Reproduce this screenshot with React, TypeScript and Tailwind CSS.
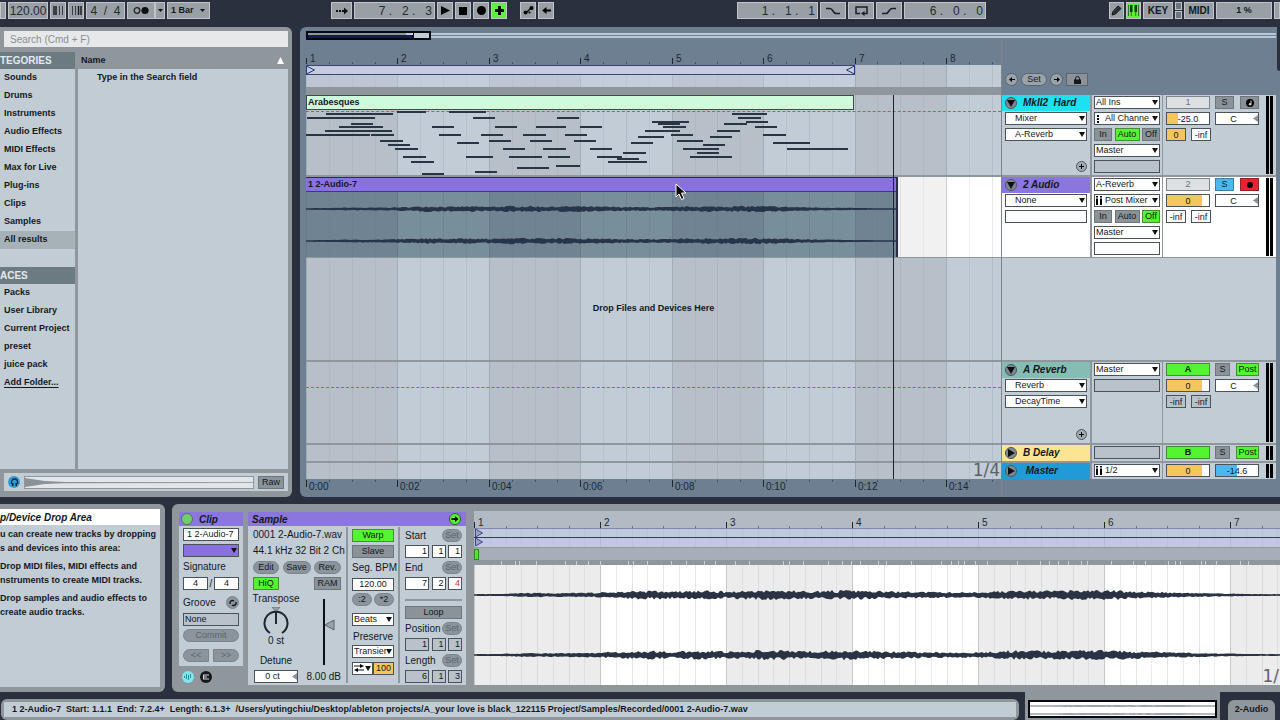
import { clsx } from "clsx";
import type { ComponentProps, ReactNode } from "react";

const ARRANGE_BAR = 640 / 7;
const CLIP_BAR = 126;

type Note = [x: number, y: number, width: number];

const NOTES: Note[] = [
	[20, 19, 67], [1, 23, 68], [45, 29, 22], [33, 32, 44], [19, 36, 67],
	[0, 40, 64], [65, 40, 23], [74, 46, 23], [82, 50, 22], [89, 54, 23],
	[97, 62, 23], [105, 67, 23], [116, 79, 22], [91, 17, 29], [143, 17, 37],
	[167, 23, 22], [126, 32, 22], [133, 40, 22], [151, 48, 22], [160, 62, 27],
	[169, 77, 22], [175, 40, 22], [183, 46, 22], [189, 32, 22], [197, 54, 22],
	[203, 62, 33], [211, 73, 32], [217, 40, 23], [224, 46, 22], [230, 32, 30],
	[237, 54, 23], [242, 62, 22], [250, 71, 24], [251, 23, 22], [259, 40, 22],
	[268, 46, 22], [274, 32, 22], [284, 54, 22], [291, 62, 25], [302, 67, 39],
	[311, 64, 22], [317, 58, 23], [325, 48, 22], [332, 42, 26], [339, 36, 35],
	[346, 27, 37], [352, 29, 22], [357, 32, 23], [365, 40, 22], [371, 46, 26],
	[377, 54, 36], [391, 58, 22], [384, 62, 42], [397, 50, 22], [404, 42, 22],
	[411, 36, 23], [418, 29, 23], [426, 19, 35], [432, 23, 23], [440, 27, 22],
	[449, 32, 22], [457, 40, 23], [467, 48, 37], [481, 54, 61],
];

const CATEGORIES = [
	"Sounds",
	"Drums",
	"Instruments",
	"Audio Effects",
	"MIDI Effects",
	"Max for Live",
	"Plug-ins",
	"Clips",
	"Samples",
	"All results",
];

const PLACES = [
	"Packs",
	"User Library",
	"Current Project",
	"preset",
	"juice pack",
];

// Loudness of the recording over its length, 0..1
const ENVELOPE = [
	0.05, 0.12, 0.35, 0.3, 0.4, 0.6, 0.95, 0.7, 0.9, 0.7, 1, 0.95, 0.8, 1,
	0.8, 0.7, 0.6, 0.5, 0.6, 0.9, 0.85, 0.95, 1, 0.9, 0.6, 0.45, 0.3, 0.15,
	0.05, 0.05,
];

function wavePath(width: number, mid: number, peak: number, seed: number) {
	let s = seed;
	const random = () => {
		s = (s * 16807) % 2147483647;
		return s / 2147483647;
	};
	const top: string[] = [];
	const bottom: string[] = [];
	for (let x = 0; x <= width; x += 2) {
		const p = (x / width) * (ENVELOPE.length - 1);
		const i = Math.min(Math.floor(p), ENVELOPE.length - 2);
		const level = ENVELOPE[i] + (ENVELOPE[i + 1] - ENVELOPE[i]) * (p - i);
		const up = 0.7 + peak * level * (0.3 + 0.7 * random());
		const down = 0.7 + peak * level * (0.3 + 0.7 * random());
		top.push(`${x},${(mid - up).toFixed(1)}`);
		bottom.unshift(`${x},${(mid + down).toFixed(1)}`);
	}
	return `M${top.join("L")}L${bottom.join("L")}Z`;
}

interface GridProps {
	bar: number;
	steps: number;
	odd: string;
	even: string;
	line: string;
}

/**
 * Alternating bar shading with beat lines, fills its positioned parent.
 */
function Grid({ bar, steps, odd, even, line }: GridProps) {
	return (
		<svg className="absolute inset-0 size-full" shapeRendering="crispEdges">
			{Array.from({ length: 24 }, (_, i) => (
				<g key={i}>
					<rect
						x={i * bar}
						width={bar}
						height="100%"
						fill={i % 2 ? even : odd}
					/>
					{Array.from({ length: steps }, (_, j) => (
						<rect
							key={j}
							x={Math.round(i * bar + (j * bar) / steps)}
							width="1"
							height="100%"
							fill={line}
							opacity={j === 0 ? 1 : j % 2 ? 0.35 : 0.5}
						/>
					))}
				</g>
			))}
		</svg>
	);
}

function LaneGrid() {
	return (
		<Grid
			bar={ARRANGE_BAR}
			steps={4}
			odd="#b7bfc9"
			even="#c1ccd6"
			line="#a3adb7"
		/>
	);
}

interface RulerProps {
	bar: number;
	bars: number;
	steps: number;
	label: (index: number) => string;
	labelOffset?: number;
	baseline: number;
	tickTop: number;
	tickBottom: number;
	fromBottom?: boolean;
}

function Ruler({
	bar,
	bars,
	steps,
	label,
	labelOffset = 4,
	baseline,
	tickTop,
	tickBottom,
	fromBottom = true,
}: RulerProps) {
	return (
		<svg className="absolute inset-0 size-full" shapeRendering="crispEdges">
			{Array.from({ length: bars }, (_, i) => (
				<g key={i} fill="#1f2733">
					<rect
						x={Math.round(i * bar)}
						y={tickTop}
						width="1"
						height={tickBottom - tickTop}
					/>
					{Array.from({ length: steps - 1 }, (_, j) => (
						<rect
							key={j}
							x={Math.round(i * bar + ((j + 1) * bar) / steps)}
							y={fromBottom ? tickBottom - 2 : tickTop}
							width="1"
							height="2"
							opacity="0.5"
						/>
					))}
					<text
						x={Math.round(i * bar) + labelOffset}
						y={baseline}
						fontSize="10"
					>
						{label(i)}
					</text>
				</g>
			))}
		</svg>
	);
}

function Caret({ className }: { className?: string }) {
	return (
		<svg className={clsx("h-[5px] w-[6px]", className)} viewBox="0 0 6 5">
			<path d="M0 0h6L3 5z" fill="#111" />
		</svg>
	);
}

interface PickerProps {
	label: string;
	value: string;
	className?: string;
	fill?: string;
	icon?: ReactNode;
	inset?: string;
}

function Picker({
	label,
	value,
	className,
	fill = "bg-white",
	icon,
	inset = "pl-px",
}: PickerProps) {
	return (
		<span
			className={clsx(
				"relative flex h-[13px] min-w-0 items-center border border-[#4a525b]",
				fill,
				className,
			)}
		>
			{icon}
			<select
				aria-label={label}
				className={clsx(
					"h-full w-full min-w-0 appearance-none bg-transparent pr-[7px] text-[9px] leading-[11px] outline-none",
					inset,
				)}
			>
				<option>{value}</option>
			</select>
			<Caret className="pointer-events-none absolute right-px" />
		</span>
	);
}

function Field({ className, ...props }: ComponentProps<"input">) {
	return (
		<input
			className={clsx(
				"h-[13px] min-w-0 border border-[#4a525b] px-px text-[9px] leading-[11px] outline-none",
				className,
			)}
			{...props}
		/>
	);
}

function Toggle({ className, children, ...props }: ComponentProps<"button">) {
	return (
		<button
			type="button"
			className={clsx(
				"flex h-[13px] items-center justify-center border text-[9px] leading-[11px]",
				className,
			)}
			{...props}
		>
			{children}
		</button>
	);
}

const OFF = "border-[#6e767d] bg-[#8b9298]";
const ON = "border-[#4b8a3b] bg-[#52f52f]";
const PILL = "rounded-full border-[#7b848c] bg-[#8b949b]";

/* Transport */

function BarButton({ className, children, ...props }: ComponentProps<"button">) {
	return (
		<button
			type="button"
			className={clsx(
				"flex h-[17px] shrink-0 items-center justify-center border border-[#bfc5ca]",
				className,
			)}
			{...props}
		>
			{children}
		</button>
	);
}

function BarField({ className, ...props }: ComponentProps<"input">) {
	return (
		<input
			className={clsx(
				"h-[17px] border border-[#bfc5ca] bg-[#989fa5] text-[#242b33] text-[12px] outline-none",
				className,
			)}
			{...props}
		/>
	);
}

function Transport() {
	return (
		<header className="flex h-[27px] items-start pt-[2px] text-[#14181d]">
			<div className="flex gap-[2px]">
				<BarButton aria-label="Tap options" className="w-[6px] bg-[#989fa5]" />
				<BarField
					aria-label="Tempo"
					defaultValue="120.00"
					className="w-10 text-center"
				/>
				<BarButton aria-label="Nudge down" className="w-4 bg-[#989fa5]">
					<svg className="size-[11px]" viewBox="0 0 11 11">
						<path d="M1 1v9M3 1v9" stroke="#1a1f26" strokeWidth="1.500" />
						<path d="M6.500 1v9M9.500 1v9" stroke="#3a4048" />
					</svg>
				</BarButton>
				<BarButton aria-label="Nudge up" className="w-4 bg-[#989fa5]">
					<svg className="size-[11px]" viewBox="0 0 11 11">
						<path d="M1.500 1v9M4.500 1v9" stroke="#3a4048" />
						<path d="M7.500 1v9M10 1v9" stroke="#1a1f26" strokeWidth="1.500" />
					</svg>
				</BarButton>
				<BarField
					aria-label="Time signature"
					defaultValue="4  /  4"
					className="w-[39px] whitespace-pre text-center"
				/>
				<div className="flex">
					<BarButton aria-label="Metronome" className="w-7 bg-[#989fa5]">
						<svg className="h-[9px] w-4" viewBox="0 0 16 9">
							<circle
								cx="4"
								cy="4.500"
								r="2.800"
								fill="none"
								stroke="#222"
								strokeWidth="1.300"
							/>
							<circle cx="12" cy="4.500" r="3.600" fill="#0c0f13" />
						</svg>
					</BarButton>
					<BarButton
						aria-label="Metronome settings"
						className="w-[10px] bg-[#989fa5]"
					>
						<svg className="h-[3px] w-[5px]" viewBox="0 0 5 3">
							<path d="M0 0h5L2.500 3z" fill="#111" />
						</svg>
					</BarButton>
				</div>
				<span className="relative flex h-[17px] w-[43px] items-center border border-[#bfc5ca] bg-[#989fa5]">
					<select
						aria-label="Quantization"
						className="w-full appearance-none pl-[3px] font-bold text-[9px] outline-none"
					>
						<option>1 Bar</option>
					</select>
					<svg
						className="pointer-events-none absolute right-1 h-[3px] w-[5px]"
						viewBox="0 0 5 3"
					>
						<path d="M0 0h5L2.500 3z" fill="#111" />
					</svg>
				</span>
			</div>

			<div className="ml-[121px] flex gap-[2px]">
				<BarButton aria-label="Follow" className="w-[21px] bg-[#989fa5]">
					<svg className="h-2 w-3" viewBox="0 0 12 8">
						<path d="M0 3h2v2H0zM3 3h2v2H3zM6 3h2v2H6zM8 .5 12 4 8 7.500z" fill="#111" />
					</svg>
				</BarButton>
				<BarField
					aria-label="Arrangement position"
					defaultValue="7 .   2 .   3"
					className="w-[81px] whitespace-pre pr-[2px] text-right"
				/>
				<BarButton aria-label="Play" className="w-4 bg-[#989fa5]">
					<svg className="size-[9px]" viewBox="0 0 9 9">
						<path d="M0 0 9 4.500 0 9z" />
					</svg>
				</BarButton>
				<BarButton aria-label="Stop" className="w-4 bg-[#989fa5]">
					<svg className="size-2" viewBox="0 0 8 8">
						<path d="M0 0h8v8H0z" />
					</svg>
				</BarButton>
				<BarButton aria-label="Record" className="w-4 bg-[#989fa5]">
					<svg className="size-[9px]" viewBox="0 0 9 9">
						<circle cx="4.500" cy="4.500" r="4.500" />
					</svg>
				</BarButton>
				<BarButton aria-label="Overdub" className="w-4 bg-[#5ff03f]">
					<svg className="size-[9px]" viewBox="0 0 9 9">
						<path d="M3 0h3v3h3v3H6v3H3V6H0V3h3z" />
					</svg>
				</BarButton>
				<BarButton
					aria-label="Automation arm"
					className="ml-[11px] w-4 bg-[#989fa5]"
				>
					<svg className="size-[11px]" viewBox="0 0 11 11">
						<path d="M3 8 8 3" stroke="#111" strokeWidth="1.500" />
						<circle cx="2.500" cy="7.500" r="2" />
						<circle cx="8.500" cy="3" r="2" />
						<circle cx="6.500" cy="7.500" r="1" />
					</svg>
				</BarButton>
				<BarButton
					aria-label="Back to arrangement"
					className="w-4 bg-[#989fa5]"
				>
					<svg className="h-[7px] w-[9px]" viewBox="0 0 9 7">
						<path d="M0 3.500 4.500 0v2.500H9v2H4.500V7z" />
					</svg>
				</BarButton>
			</div>

			<div className="ml-[183px] flex gap-[2px]">
				<BarField
					aria-label="Loop start"
					defaultValue="1 .   1 .   1"
					className="w-[81px] whitespace-pre pr-[2px] text-right"
				/>
				<BarButton aria-label="Punch in" className="w-[26px] bg-[#989fa5]">
					<svg className="h-2 w-[14px]" viewBox="0 0 14 8" fill="none">
						<path
							d="M0 1.500h4c3 0 3 5 6 5h4"
							stroke="#1a1f26"
							strokeWidth="1.500"
						/>
					</svg>
				</BarButton>
				<BarButton aria-label="Loop" className="w-[26px] bg-[#989fa5]">
					<svg className="h-[10px] w-[13px]" viewBox="0 0 13 10" fill="none">
						<path d="M5 7.500H1V1h11v6.500H9" stroke="#1a1f26" strokeWidth="1.500" />
						<path d="M9.500 5v5L6 7.500z" fill="#1a1f26" />
					</svg>
				</BarButton>
				<BarButton aria-label="Punch out" className="w-[26px] bg-[#989fa5]">
					<svg className="h-2 w-[14px]" viewBox="0 0 14 8" fill="none">
						<path
							d="M0 6.500h4c3 0 3-5 6-5h4"
							stroke="#1a1f26"
							strokeWidth="1.500"
						/>
					</svg>
				</BarButton>
				<BarField
					aria-label="Loop length"
					defaultValue="6 .   0 .   0"
					className="w-[82px] whitespace-pre pr-[2px] text-right"
				/>
			</div>

			<div className="ml-auto flex gap-[2px]">
				<BarButton aria-label="Draw mode" className="w-[15px] bg-[#989fa5]">
					<svg className="size-[11px]" viewBox="0 0 11 11">
						<path
							d="M1 10 2 6.500 7 1l3 2.500L4.500 9zM3.500 8l5-5"
							fill="#3a4048"
							stroke="#111"
						/>
					</svg>
				</BarButton>
				<BarButton
					aria-label="Computer MIDI keyboard"
					className="w-[15px] bg-[#5ff03f]"
				>
					<svg className="size-[11px]" viewBox="0 0 11 11">
						<path d="M2 0h2.500v7H2zM6.500 0H9v7H6.500z" fill="#123a0c" />
						<path d="M.5 0v11M3.300 7v4M7.700 7v4M10.500 0v11" stroke="#2c7a1f" />
					</svg>
				</BarButton>
				<BarButton className="w-[30px] bg-[#989fa5] font-bold text-[10px]">
					KEY
				</BarButton>
				<span className="flex w-[7px] flex-col justify-between">
					<i className="h-2 border border-[#bfc5ca] bg-[#6f777e]" />
					<i className="h-2 border border-[#bfc5ca] bg-[#6f777e]" />
				</span>
				<BarButton className="w-[30px] bg-[#989fa5] font-bold text-[10px]">
					MIDI
				</BarButton>
				<output className="flex h-[17px] w-[56px] items-center justify-center border border-[#bfc5ca] bg-[#989fa5] font-bold text-[9px]">
					1 %
				</output>
				<BarButton aria-label="Disk overload" className="w-[6px] bg-[#989fa5]" />
			</div>
		</header>
	);
}

/* Browser */

function Browser() {
	return (
		<aside className="flex w-[292px] shrink-0 flex-col rounded-r-md bg-[#8f979c] pt-1 pr-1 pb-[6px] font-bold text-[9px]">
			<input
				aria-label="Search"
				placeholder="Search (Cmd + F)"
				className="ml-1 h-4 bg-[#e6e8e9] px-[6px] font-normal text-[10px] outline-none placeholder:text-[#8a8f94]"
			/>
			<div className="mt-[5px] flex flex-1 bg-[#c2ccd5]">
				<nav className="w-[75px] shrink-0">
					<h2 className="flex h-[17px] items-center bg-[#6c7a81] text-[10px] text-[#e4eaed]">
						TEGORIES
					</h2>
					<ul>
						{CATEGORIES.map((name) => (
							<li
								key={name}
								className={clsx(
									"flex h-[18px] items-center pl-1",
									name === "All results" && "bg-[#a7b1b8]",
								)}
							>
								{name}
							</li>
						))}
					</ul>
					<h2 className="mt-[18px] flex h-[17px] items-center bg-[#6c7a81] text-[10px] text-[#e4eaed]">
						ACES
					</h2>
					<ul>
						{PLACES.map((name) => (
							<li
								key={name}
								className="flex h-[18px] items-center whitespace-nowrap pl-1"
							>
								{name}
							</li>
						))}
						<li className="flex h-[18px] items-center pl-1">
							<a href="#add-folder" className="underline underline-offset-2">
								Add Folder...
							</a>
						</li>
					</ul>
				</nav>
				<div className="flex-1 border-[#8f979c] border-l-[3px]">
					<div className="flex h-[17px] items-center justify-between bg-[#8f979c] pr-1 pl-[3px]">
						Name
						<svg className="size-[7px]" viewBox="0 0 7 7">
							<path d="M3.500 0 7 7H0z" fill="#fff" />
						</svg>
					</div>
					<p className="flex h-[18px] items-center pl-[19px]">
						Type in the Search field
					</p>
				</div>
			</div>
			<div className="mt-1 ml-1 flex h-[18px] items-center bg-[#c2ccd5]">
				<button
					type="button"
					aria-label="Preview"
					className="ml-1 flex size-3 items-center justify-center rounded-full bg-[#2f9bd4]"
				>
					<svg className="size-[9px]" viewBox="0 0 9 9" fill="none">
						<path d="M1.500 6V4a3 3 0 0 1 6 0v2" stroke="#0c2a40" strokeWidth="1.300" />
						<path d="M2 5h1.500v3H2zM5.500 5H7v3H5.500z" fill="#0c2a40" />
					</svg>
				</button>
				<div className="ml-1 flex h-[13px] flex-1 items-center border border-[#8f979c] bg-[#e2e6e9]">
					<svg
						className="h-[9px] w-full"
						viewBox="0 0 230 9"
						preserveAspectRatio="none"
					>
						<path d="M0 0 20 3 40 4 230 4.200V5L40 5.300 20 6 0 9z" fill="#8a9298" />
					</svg>
				</div>
				<Toggle className={clsx("mr-1 ml-1 w-[26px] font-normal", OFF)}>
					Raw
				</Toggle>
			</div>
		</aside>
	);
}

/* Arrangement */

function AutomationLine({ className }: { className: string }) {
	return (
		<i
			className={clsx(
				"absolute inset-x-0 border-[#c9534f] border-t border-dashed",
				className,
			)}
		/>
	);
}

function Timeline() {
	return (
		<div className="relative flex min-w-0 flex-1 flex-col overflow-hidden">
			<div className="relative h-[25px]">
				<Ruler
					bar={ARRANGE_BAR}
					bars={8}
					steps={4}
					label={(i) => `${i + 1}`}
					baseline={22}
					tickTop={18}
					tickBottom={24}
				/>
			</div>
			<div className="relative">
				<LaneGrid />
				<div className="relative flex h-[10px] w-[549px] items-center justify-between border-[#3a4575] border-y bg-[#c5cce0]">
					<svg className="h-2 w-[9px]" viewBox="0 0 9 8" fill="none">
						<path d="M.5 0v8l8-4z" stroke="#2b3880" />
					</svg>
					<svg className="h-2 w-[9px]" viewBox="0 0 9 8" fill="none">
						<path d="M8.500 0v8l-8-4z" stroke="#2b3880" />
					</svg>
				</div>
				<div className="relative h-3 w-[549px] bg-[#c8cfe4]/40" />
			</div>
			<div className="h-2 bg-[#8f979c]" />

			<div className="relative h-[82px] border-[#8f979c] border-b-2">
				<LaneGrid />
				<AutomationLine className="top-4" />
				<div className="relative flex h-[15px] w-[548px] items-center border border-[#3e4a45] bg-[#cdfbdb] pl-px font-bold text-[9px]">
					Arabesques
				</div>
				<svg className="absolute inset-0 size-full">
					{NOTES.map(([x, y, width]) => (
						<rect
							key={`${x}-${y}`}
							x={x}
							y={y - 1}
							width={width}
							height="2"
							fill="#2a3445"
						/>
					))}
				</svg>
			</div>

			<div className="relative h-[81px] border-[#8f979c] border-b">
				<Grid
					bar={ARRANGE_BAR}
					steps={4}
					odd="#f1f1f2"
					even="#ffffff"
					line="#cfd1d3"
				/>
				<div className="relative flex h-full w-[592px] flex-col overflow-hidden border-[#2a2f45] border-t border-r-2">
					<div className="flex h-[14px] items-center border-[#40358a] border-b bg-[#8a71e2] pl-[2px] font-bold text-[9px]">
						1 2-Audio-7
					</div>
					<div className="relative flex-1">
						<Grid
							bar={ARRANGE_BAR}
							steps={4}
							odd="#6f8392"
							even="#788e9b"
							line="#667a88"
						/>
						<svg className="absolute inset-0 size-full">
							<path d={wavePath(590, 17, 2.6, 7)} fill="#27344a" />
							<path d={wavePath(590, 49, 2.6, 31)} fill="#27344a" />
						</svg>
					</div>
				</div>
			</div>

			<div className="relative flex min-h-[104px] flex-1 items-center justify-center border-[#8f979c] border-b-2 font-bold text-[9px]">
				<LaneGrid />
				<p className="relative">Drop Files and Devices Here</p>
			</div>

			<div className="relative h-[83px] border-[#8f979c] border-b-2">
				<LaneGrid />
				<AutomationLine className="top-[25px]" />
			</div>
			<div className="relative h-[18px] border-[#8f979c] border-b-2">
				<LaneGrid />
			</div>
			<div className="relative h-4">
				<LaneGrid />
				<span className="absolute right-px bottom-0 font-['DejaVu_Sans'] text-[#5c6268] text-[17px] leading-[17px]">
					1/4
				</span>
			</div>
			<div className="relative h-[18px]">
				<Ruler
					bar={ARRANGE_BAR}
					bars={8}
					steps={4}
					label={(i) => `0:${String(i * 2).padStart(2, "0")}`}
					labelOffset={3}
					baseline={11}
					tickTop={1}
					tickBottom={8}
					fromBottom={false}
				/>
			</div>
			<i className="absolute top-[55px] bottom-[18px] left-[587px] w-px bg-[#1c222c]" />
		</div>
	);
}

function FoldButton({ open = true }: { open?: boolean }) {
	return (
		<button
			type="button"
			aria-label={open ? "Fold track" : "Unfold track"}
			className="flex size-3 shrink-0 items-center justify-center rounded-full border border-[#4d565e] bg-[#7f888e]"
		>
			<svg className="size-2" viewBox="0 0 8 8">
				<path d={open ? "M0 1h8L4 8z" : "M1 0v8l7-4z"} fill="#0d1013" />
			</svg>
		</button>
	);
}

interface TrackProps {
	name: string;
	bar: string;
	className: string;
	open?: boolean;
	device?: ReactNode;
	routing?: ReactNode;
	mixer: ReactNode;
}

/**
 * One row of the track header column: name, routing and mixer sections.
 */
function Track({ name, bar, className, open, device, routing, mixer }: TrackProps) {
	return (
		<section className={clsx("flex border-[#8f979c]", className)}>
			<div className="flex w-[90px] flex-col border-[#8f979c] border-r-2">
				<div
					className={clsx(
						"flex h-4 shrink-0 items-center gap-[6px] pl-[3px] font-bold text-[10px] italic leading-[14px]",
						bar,
					)}
				>
					<FoldButton open={open} />
					{name}
				</div>
				<div className="flex flex-1 flex-col gap-[3px] px-[3px] pt-px">
					{device}
				</div>
			</div>
			<div className="flex w-[71px] flex-col gap-[3px] border-[#8f979c] border-r px-[2px] pt-px">
				{routing}
			</div>
			<div className="flex w-[113px] justify-between pt-px pr-[3px] pl-[3px]">
				<div className="flex flex-col gap-[3px]">{mixer}</div>
				<div className="mb-px flex gap-px">
					<i className="w-[3px] bg-black" />
					<i className="w-[3px] bg-black" />
				</div>
			</div>
		</section>
	);
}

function MixRow({ children }: { children: ReactNode }) {
	return <div className="flex gap-[5px]">{children}</div>;
}

function Pan() {
	return (
		<span className="relative flex w-11 items-center">
			<Field
				aria-label="Pan"
				defaultValue="C"
				className="w-full bg-white pr-2 text-center"
			/>
			<svg className="absolute right-px h-[7px] w-[5px]" viewBox="0 0 5 7">
				<path d="M5 0v7L0 3.500z" fill="#8b9298" />
			</svg>
		</span>
	);
}

function Monitor({ value }: { value: "In" | "Auto" | "Off" }) {
	return (
		<div className="flex justify-between">
			<Toggle className={clsx("w-[18px]", value === "In" ? ON : OFF)}>In</Toggle>
			<Toggle className={clsx("w-[25px]", value === "Auto" ? ON : OFF)}>
				Auto
			</Toggle>
			<Toggle className={clsx("w-[18px]", value === "Off" ? ON : OFF)}>
				Off
			</Toggle>
		</div>
	);
}

function AddLane() {
	return (
		<button
			type="button"
			aria-label="Add automation lane"
			className="mt-auto mb-[3px] flex size-[11px] items-center justify-center self-end rounded-full border border-[#4d565e] bg-[#a2abb2]"
		>
			<svg className="size-[7px]" viewBox="0 0 7 7">
				<path d="M3 1h1v2h2v1H4v2H3V4H1V3h2z" />
			</svg>
		</button>
	);
}

function Pips() {
	return (
		<svg className="ml-px h-[9px] w-[6px] shrink-0" viewBox="0 0 6 9">
			<path d="M0 0h2v1.500H0zM4 0h2v1.500H4zM0 2.500h2V9H0zM4 2.500h2V9H4z" />
		</svg>
	);
}

const VOLUME = "bg-[linear-gradient(90deg,#f3c75c_84%,#fff_84%)]";

function TrackHeaders() {
	return (
		<div className="flex w-[275px] shrink-0 flex-col border-[#7c858c] border-l">
			<div className="flex h-[55px] items-end gap-[3px] pb-[9px] pl-[3px]">
				<Toggle
					aria-label="Previous locator"
					className="w-[13px] rounded-full border-[#59646f] bg-[#9aa3aa]"
				>
					<svg className="h-[5px] w-[6px]" viewBox="0 0 6 5">
						<path d="M0 2.500 3 0v2h3v1H3v2z" />
					</svg>
				</Toggle>
				<Toggle className="w-[26px] rounded-full border-[#59646f] bg-[#9aa3aa]">
					Set
				</Toggle>
				<Toggle
					aria-label="Next locator"
					className="w-[13px] rounded-full border-[#59646f] bg-[#9aa3aa]"
				>
					<svg className="h-[5px] w-[6px]" viewBox="0 0 6 5">
						<path d="M6 2.500 3 0v2H0v1h3v2z" />
					</svg>
				</Toggle>
				<Toggle
					aria-label="Lock envelopes"
					className="w-[22px] border-[#59646f] bg-[#8b9298]"
				>
					<svg className="h-2 w-[7px]" viewBox="0 0 7 8" fill="none">
						<path d="M1.500 4V2.500a2 2 0 0 1 4 0V4" stroke="#14181d" />
						<path d="M0 3.500h7V8H0z" fill="#14181d" />
					</svg>
				</Toggle>
			</div>

			<Track
				name="MkII2  Hard"
				bar="bg-[#1fe0f0] whitespace-pre"
				className="h-[82px] border-b-2 bg-[#c2ccd5]"
				device={
					<>
						<Picker label="Device" value="Mixer" inset="pl-[9px]" />
						<Picker label="Parameter" value="A-Reverb" inset="pl-[9px]" />
						<AddLane />
					</>
				}
				routing={
					<>
						<Picker label="Input type" value="All Ins" />
						<Picker
							label="Input channel"
							value="All Channe"
							icon={
								<svg className="ml-[2px] h-2 w-[2px] shrink-0" viewBox="0 0 2 8">
									<path d="M0 0h2v2H0zM0 3h2v2H0zM0 6h2v2H0z" />
								</svg>
							}
							inset="pl-[6px]"
						/>
						<Monitor value="Auto" />
						<Picker label="Output type" value="Master" />
						<Field aria-label="Output channel" className="bg-[#b9c2ca]" />
					</>
				}
				mixer={
					<>
						<MixRow>
							<Toggle className="w-11 border-[#7c858c] bg-[#dde0e3] text-[#6d7379]">
								1
							</Toggle>
							<div className="flex w-11 justify-between">
								<Toggle className={clsx("w-[19px]", OFF)}>S</Toggle>
								<Toggle aria-label="Arm" className={clsx("w-[19px]", OFF)}>
									<svg className="size-2" viewBox="0 0 8 8">
										<circle cx="4" cy="4" r="4" />
										<path d="M5 1.500v3.700" stroke="#ccc" />
										<circle cx="4" cy="5.300" r="1.200" fill="#ccc" />
									</svg>
								</Toggle>
							</div>
						</MixRow>
						<MixRow>
							<Field
								aria-label="Volume"
								defaultValue="-25.0"
								className="w-11 bg-[linear-gradient(90deg,#f3c75c_26%,#fff_26%)] text-center"
							/>
							<Pan />
						</MixRow>
						<MixRow>
							<Field
								aria-label="Send A"
								defaultValue="0"
								className="w-5 bg-[#f3c75c] text-center"
							/>
							<Field
								aria-label="Send B"
								defaultValue="-inf"
								className="w-5 bg-white text-center"
							/>
						</MixRow>
					</>
				}
			/>

			<Track
				name="2 Audio"
				bar="bg-[#8a76dc]"
				className="h-[81px] border-b bg-white"
				device={
					<>
						<Picker label="Device" value="None" inset="pl-[9px]" />
						<Field aria-label="Parameter" className="bg-white" />
					</>
				}
				routing={
					<>
						<Picker label="Input type" value="A-Reverb" />
						<Picker
							label="Input channel"
							value="Post Mixer"
							icon={<Pips />}
							inset="pl-[3px]"
						/>
						<Monitor value="Off" />
						<Picker label="Output type" value="Master" />
						<Field aria-label="Output channel" className="bg-white" />
					</>
				}
				mixer={
					<>
						<MixRow>
							<Toggle className="w-11 border-[#7c858c] bg-[#dde0e3] text-[#6d7379]">
								2
							</Toggle>
							<div className="flex w-11 justify-between">
								<Toggle className="w-[19px] border-[#3f7fa5] bg-[#4db8ee]">S</Toggle>
								<Toggle
									aria-label="Arm"
									className="w-[19px] border-[#9b2029] bg-[#ec2131]"
								>
									<svg className="size-[6px]" viewBox="0 0 6 6">
										<circle cx="3" cy="3" r="3" />
									</svg>
								</Toggle>
							</div>
						</MixRow>
						<MixRow>
							<Field
								aria-label="Volume"
								defaultValue="0"
								className={clsx("w-11 text-center", VOLUME)}
							/>
							<Pan />
						</MixRow>
						<MixRow>
							<Field
								aria-label="Send A"
								defaultValue="-inf"
								className="w-5 bg-white text-center"
							/>
							<Field
								aria-label="Send B"
								defaultValue="-inf"
								className="w-5 bg-white text-center"
							/>
						</MixRow>
					</>
				}
			/>

			<div className="min-h-[104px] flex-1 border-[#8f979c] border-b-2 bg-[#c2ccd5]" />

			<Track
				name="A Reverb"
				bar="bg-[#85bdb5]"
				className="h-[83px] border-b-2 bg-[#c2ccd5]"
				device={
					<>
						<Picker label="Device" value="Reverb" inset="pl-[9px]" />
						<Picker label="Parameter" value="DecayTime" inset="pl-[9px]" />
						<AddLane />
					</>
				}
				routing={
					<>
						<Picker label="Output type" value="Master" />
						<Field aria-label="Output channel" className="bg-[#b9c2ca]" />
					</>
				}
				mixer={
					<>
						<MixRow>
							<Toggle className={clsx("w-11 font-bold", ON)}>A</Toggle>
							<div className="flex w-11 justify-between">
								<Toggle className={clsx("w-[15px]", OFF)}>S</Toggle>
								<Toggle className={clsx("w-[23px]", ON)}>Post</Toggle>
							</div>
						</MixRow>
						<MixRow>
							<Field
								aria-label="Volume"
								defaultValue="0"
								className={clsx("w-11 text-center", VOLUME)}
							/>
							<Pan />
						</MixRow>
						<MixRow>
							<Field
								aria-label="Send A"
								defaultValue="-inf"
								className="w-5 bg-[#b9c2ca] text-center"
							/>
							<Field
								aria-label="Send B"
								defaultValue="-inf"
								className="w-5 bg-[#b9c2ca] text-center"
							/>
						</MixRow>
					</>
				}
			/>

			<Track
				name="B Delay"
				bar="bg-[#f9e592]"
				className="h-[18px] border-b-2 bg-[#c2ccd5]"
				open={false}
				routing={<Field aria-label="Output channel" className="bg-[#b9c2ca]" />}
				mixer={
					<MixRow>
						<Toggle className={clsx("w-11 font-bold", ON)}>B</Toggle>
						<div className="flex w-11 justify-between">
							<Toggle className={clsx("w-[15px]", OFF)}>S</Toggle>
							<Toggle className={clsx("w-[23px]", ON)}>Post</Toggle>
						</div>
					</MixRow>
				}
			/>

			<Track
				name=" Master"
				bar="bg-[#1f9bd7] whitespace-pre"
				className="h-4 bg-[#c2ccd5]"
				open={false}
				routing={
					<Picker
						label="Master out"
						value="1/2"
						icon={<Pips />}
						inset="pl-[3px]"
					/>
				}
				mixer={
					<MixRow>
						<Field
							aria-label="Volume"
							defaultValue="0"
							className={clsx("w-11 text-center", VOLUME)}
						/>
						<Field
							aria-label="Cue volume"
							defaultValue="-14.6"
							className="w-11 bg-[linear-gradient(90deg,#4db8ee_50%,#fff_50%)] text-center"
						/>
					</MixRow>
				}
			/>
			<div className="h-[18px]" />
		</div>
	);
}

function Arrangement() {
	return (
		<main className="relative flex min-w-0 flex-1 flex-col rounded-l-md bg-[#6d7f91] pt-1 pr-1 pl-[6px]">
			<div className="flex h-[9px] items-center">
				<svg className="h-[9px] w-[125px] shrink-0" viewBox="0 0 125 9">
					<path d="M0 0h125v9H0z" fill="#05070f" />
					<path d="M2 2h98v2H2z" fill="#8f979c" />
					<path d="M2 4h104v3H2z" fill="#111a55" />
					<path d="M100 2h7v2h-7z" fill="#c5cce0" />
					<path d="M108 2h15v5h-15z" fill="#c2ccd5" />
				</svg>
				<div className="h-[5px] flex-1 border-[#b9c8d6] border-y-2 bg-[#6d7f91]" />
			</div>
			<div className="flex flex-1">
				<Timeline />
				<TrackHeaders />
			</div>
			<i className="absolute top-0 right-0 h-11 w-[3px] rounded-bl-md bg-[#2b303e]" />
		</main>
	);
}

/* Detail view */

function InfoView() {
	return (
		<aside className="flex w-[165px] shrink-0 flex-col rounded-r-md bg-[#8f979c] pt-[5px] pr-[5px] pb-[5px] font-bold text-[9px]">
			<h2 className="flex h-4 items-center bg-white text-[10px] italic">
				p/Device Drop Area
			</h2>
			<div className="flex-1 space-y-1 whitespace-nowrap bg-[#c2ccd5] pt-[2px] leading-[14px]">
				<p>
					u can create new tracks by dropping
					<br />s and devices into this area:
				</p>
				<p>
					Drop MIDI files, MIDI effects and
					<br />
					nstruments to create MIDI tracks.
				</p>
				<p>
					Drop samples and audio effects to
					<br />
					create audio tracks.
				</p>
			</div>
		</aside>
	);
}

function ClipBox() {
	return (
		<div className="w-16 shrink-0">
			<div className="bg-[#c2ccd5] pb-[3px]">
				<h2 className="flex h-[14px] items-center gap-[6px] bg-[#8a76dc] pl-[2px] font-bold text-[10px] italic">
					<svg className="size-3" viewBox="0 0 12 12">
						<circle cx="6" cy="6" r="5.500" fill="#6fce6a" stroke="#54705c" />
					</svg>
					Clip
				</h2>
				<div className="flex flex-col px-1">
					<div className="flex h-4 items-center">
						<Field
							aria-label="Clip name"
							defaultValue="1 2-Audio-7"
							className="w-full bg-white pl-[3px]"
						/>
					</div>
					<div className="flex h-4 items-center">
						<Picker
							label="Clip colour"
							value=""
							className="w-full"
							fill="bg-[#8a71e2]"
						/>
					</div>
					<label htmlFor="numerator" className="h-[18px] leading-[18px]">
						Signature
					</label>
					<div className="flex h-[14px] items-center justify-between">
						<Field
							id="numerator"
							defaultValue="4"
							className="w-[25px] bg-white text-center"
						/>
						/
						<Field
							aria-label="Denominator"
							defaultValue="4"
							className="w-[25px] bg-white text-center"
						/>
					</div>
					<div className="mt-1 flex h-[17px] items-center justify-between">
						<label htmlFor="groove">Groove</label>
						<Toggle
							aria-label="Hot-swap groove"
							className={clsx("w-[13px]", PILL)}
						>
							<svg className="size-2" viewBox="0 0 8 8" fill="none">
								<path
									d="M1 5V3.500A2.500 2.500 0 0 1 5 2M7 3v1.500A2.500 2.500 0 0 1 3 6"
									stroke="#14181d"
									strokeWidth="1.400"
								/>
							</svg>
						</Toggle>
					</div>
					<div className="flex h-4 items-center">
						<Field
							id="groove"
							defaultValue="None"
							className="w-full bg-[#b9c2ca]"
						/>
					</div>
					<div className="flex h-4 items-center">
						<Toggle className={clsx("w-full text-[#5c656d]", PILL)}>Commit</Toggle>
					</div>
					<div className="mt-1 flex h-4 items-center justify-between">
						<Toggle className="w-[26px] rounded-l-full border-[#7b848c] bg-[#8b949b] text-[#5c656d]">
							&lt;&lt;
						</Toggle>
						<Toggle className="w-[26px] rounded-r-full border-[#7b848c] bg-[#8b949b] text-[#5c656d]">
							&gt;&gt;
						</Toggle>
					</div>
				</div>
			</div>
			<div className="flex gap-[6px] pt-[5px] pl-[3px]">
				<button
					type="button"
					aria-label="Sample box"
					className="flex size-3 items-center justify-center rounded-full bg-[#7fe6ee]"
				>
					<svg className="h-[6px] w-2" viewBox="0 0 8 6">
						<path d="M.5 2v2M2.500 0v5M4.500 1v5M6.500 0v4" stroke="#2b8b9c" />
					</svg>
				</button>
				<button
					type="button"
					aria-label="Envelopes box"
					className="flex size-3 items-center justify-center rounded-full bg-[#14181d]"
				>
					<svg className="size-[6px]" viewBox="0 0 6 6">
						<path d="M0 1h6M0 3h4M0 5h6M.5 1v4" stroke="#d4dade" />
					</svg>
				</button>
			</div>
		</div>
	);
}

interface PositionProps {
	label: string;
	values: [string, string, string];
	field: string;
	last?: string;
}

function Position({ label, values, field, last }: PositionProps) {
	return (
		<>
			<div className="flex h-4 items-center justify-between">
				{label}
				<Toggle
					aria-label={`Set ${label}`}
					className={clsx("w-5 text-[#5c656d]", PILL)}
				>
					Set
				</Toggle>
			</div>
			<div className="flex h-4 items-center justify-between">
				<Field
					aria-label={`${label} bars`}
					defaultValue={values[0]}
					className={clsx("w-6 text-right", field)}
				/>
				<Field
					aria-label={`${label} beats`}
					defaultValue={values[1]}
					className={clsx("w-[14px] text-right", field)}
				/>
				<Field
					aria-label={`${label} sixteenths`}
					defaultValue={values[2]}
					className={clsx("w-[14px] text-right", field, last)}
				/>
			</div>
		</>
	);
}

function SampleBox() {
	return (
		<div className="flex w-[218px] shrink-0 flex-col bg-[#c2ccd5]">
			<h2 className="flex h-[14px] items-center justify-between bg-[#8a76dc] pr-[5px] pl-1 font-bold text-[10px] italic">
				Sample
				<svg className="size-3" viewBox="0 0 12 12">
					<circle cx="6" cy="6" r="5.500" fill="#52f52f" stroke="#33622a" />
					<path d="M2.500 5H6V3l3.500 3L6 9V7H2.500z" />
				</svg>
			</h2>
			<div className="flex flex-1 pt-px">
				<div className="flex w-[98px] flex-col pl-[5px]">
					<p className="h-4 whitespace-nowrap leading-4">0001 2-Audio-7.wav</p>
					<p className="h-4 whitespace-nowrap leading-4">44.1 kHz 32 Bit 2 Ch</p>
					<div className="flex h-4 w-[88px] items-center justify-between">
						<Toggle className={clsx("w-[26px]", PILL)}>Edit</Toggle>
						<Toggle className={clsx("w-[28px]", PILL)}>Save</Toggle>
						<Toggle className={clsx("w-[27px]", PILL)}>Rev.</Toggle>
					</div>
					<div className="flex h-4 w-[88px] items-center justify-between">
						<Toggle className={clsx("w-[26px]", ON)}>HiQ</Toggle>
						<Toggle className={clsx("w-[27px]", OFF)}>RAM</Toggle>
					</div>
					<div className="flex w-[88px] justify-between">
						<div className="flex w-[46px] flex-col items-center">
							<span className="h-4 leading-4">Transpose</span>
							<svg className="h-7 w-[26px]" viewBox="0 0 26 28" fill="none">
								<path d="M9 0h8l-4 5z" fill="#9aa3aa" stroke="#6c757d" />
								<path d="M7 26a11.500 11.500 0 1 1 12 0" stroke="#1f262e" strokeWidth="2" />
								<path d="M13 5v12" stroke="#1f262e" strokeWidth="2" />
							</svg>
							<span className="h-3 leading-3">0 st</span>
							<label htmlFor="detune" className="mt-[6px] h-4 leading-4">
								Detune
							</label>
							<span className="relative flex h-[14px] w-11 items-center">
								<Field
									id="detune"
									defaultValue="0 ct"
									className="w-full bg-white pr-2 text-center"
								/>
								<svg
									className="absolute right-px h-[7px] w-[5px]"
									viewBox="0 0 5 7"
								>
									<path d="M5 0v7L0 3.500z" fill="#8b9298" />
								</svg>
							</span>
						</div>
						<div className="flex flex-col items-center whitespace-nowrap">
							<svg className="mt-2 h-[66px] w-[22px]" viewBox="0 0 22 66">
								<path d="M11 0v66" stroke="#0c0f13" strokeWidth="2" />
								<path d="M12 26l9-5v10z" fill="#9aa3aa" stroke="#5c656d" />
							</svg>
							<span className="mt-1 h-4 leading-4">8.00 dB</span>
						</div>
					</div>
				</div>

				<div className="mb-[2px] flex w-[54px] flex-col border-[#8f979c] border-x-2 px-1">
					<div className="flex h-4 items-center">
						<Toggle className={clsx("w-full", ON)}>Warp</Toggle>
					</div>
					<div className="flex h-4 items-center">
						<Toggle className={clsx("w-full", OFF)}>Slave</Toggle>
					</div>
					<label
						htmlFor="seg-bpm"
						className="h-[18px] whitespace-nowrap leading-[18px]"
					>
						Seg. BPM
					</label>
					<div className="flex h-[14px] items-center">
						<Field
							id="seg-bpm"
							defaultValue="120.00"
							className="w-full bg-white text-center"
						/>
					</div>
					<div className="flex h-4 items-center justify-between">
						<Toggle className={clsx("w-5", PILL)}>:2</Toggle>
						<Toggle className={clsx("w-5", PILL)}>*2</Toggle>
					</div>
					<div className="mt-1 flex h-4 items-center">
						<Picker label="Warp mode" value="Beats" className="w-full" />
					</div>
					<span className="mt-[2px] h-4 text-center leading-4">Preserve</span>
					<div className="flex h-[13px] items-center">
						<Picker label="Preserve" value="Transien" className="w-full" />
					</div>
					<div className="mt-[2px] flex h-4 items-center justify-between">
						<span className="relative flex h-[13px] w-[21px] items-center border border-[#4a525b] bg-white">
							<select
								aria-label="Loop mode"
								className="size-full appearance-none outline-none"
							/>
							<svg
								className="pointer-events-none absolute left-px h-2 w-[10px]"
								viewBox="0 0 10 8"
							>
								<path d="M0 2h7M10 6H3" stroke="#111" />
								<path d="M6 0l4 2-4 2zM4 4 0 6l4 2z" />
							</svg>
							<Caret className="pointer-events-none absolute right-px" />
						</span>
						<Field
							aria-label="Envelope"
							defaultValue="100"
							className="w-[21px] bg-[#f3c75c] text-center"
						/>
					</div>
				</div>

				<div className="flex w-[66px] flex-col pr-1 pl-[5px]">
					<Position label="Start" values={["1", "1", "1"]} field="bg-white" />
					<Position
						label="End"
						values={["7", "2", "4"]}
						field="bg-white"
						last="text-[#d2344a]"
					/>
					<hr className="mt-2 mb-[3px] border-[#8f979c] border-t-2" />
					<div className="flex h-4 items-center">
						<Toggle className={clsx("w-full", OFF)}>Loop</Toggle>
					</div>
					<Position
						label="Position"
						values={["1", "1", "1"]}
						field="bg-[#b9c2ca]"
					/>
					<Position
						label="Length"
						values={["6", "1", "3"]}
						field="bg-[#b9c2ca]"
					/>
				</div>
			</div>
		</div>
	);
}

const TRANSIENTS = [
	27, 41, 45, 62, 91, 102, 114, 126, 154, 159, 173, 197, 212, 230, 241, 261,
	275, 309, 315, 329, 354, 368, 377, 386, 404, 412, 437, 467, 477, 484, 490,
	501, 513, 543, 566, 575, 584, 594, 607, 613, 637, 659, 671, 694, 701, 706,
	727, 731, 742, 766, 774,
];

function SampleEditor() {
	return (
		<div className="relative flex min-w-0 flex-1 flex-col overflow-hidden">
			<div className="relative h-[17px] bg-[#b2bbc3]">
				<Ruler
					bar={CLIP_BAR}
					bars={7}
					steps={4}
					label={(i) => `${i + 1}`}
					baseline={15}
					tickTop={11}
					tickBottom={17}
				/>
			</div>
			<div className="relative">
				<Grid
					bar={CLIP_BAR}
					steps={8}
					odd="#c2c8de"
					even="#c2c9de"
					line="#b3bad0"
				/>
				<div className="relative h-[10px] border-[#7d86ad] border-t border-b border-b-[#2b3880]" />
				<div className="relative h-[9px]" />
				<svg className="absolute top-0 left-px h-[19px] w-2" viewBox="0 0 8 19">
					<path
						d="M.5 1v8l7-4zM.5 10v8l7-4z"
						fill="#9aa3bd"
						stroke="#3f4a80"
					/>
				</svg>
			</div>
			<div className="relative h-[13px] border-[#929aa2] border-t bg-[#a6afb7]">
				<i className="absolute top-px left-0 h-[11px] w-[5px] border border-[#2c8a1f] bg-[#52e52f]" />
			</div>
			<div className="relative h-[5px] bg-[#8f979c]">
				<svg className="absolute inset-0 size-full">
					{TRANSIENTS.map((x) => (
						<rect key={x} x={x} y="1" width="1" height="4" fill="#ccd1d5" />
					))}
				</svg>
			</div>
			<div className="relative flex-1">
				<Grid
					bar={CLIP_BAR}
					steps={8}
					odd="#ececec"
					even="#ffffff"
					line="#c6c8ca"
				/>
				<svg className="absolute inset-0 size-full">
					<path d={wavePath(820, 30, 4.6, 11)} fill="#2a3344" />
					<path d={wavePath(820, 90, 4.6, 57)} fill="#2a3344" />
				</svg>
				<span className="absolute right-px bottom-0 font-['DejaVu_Sans'] text-[#5c6268] text-[17px] leading-[17px]">
					1/
				</span>
			</div>
		</div>
	);
}

function StatusBar() {
	return (
		<footer className="flex h-7 items-end font-bold text-[9px]">
			<div className="mr-[6px] ml-px flex h-[21px] flex-1 rounded-md bg-[#8f979c] p-[3px]">
				<p className="flex h-[15px] flex-1 items-center whitespace-pre bg-[#c2ccd5] pl-2">
					{
						"1 2-Audio-7  Start: 1.1.1  End: 7.2.4+  Length: 6.1.3+  /Users/yutingchiu/Desktop/ableton projects/A_your love is black_122115 Project/Samples/Recorded/0001 2-Audio-7.wav"
					}
				</p>
			</div>
			<div className="h-7 w-[195px] bg-[#8f979c] px-[3px] pt-2">
				<div className="relative h-[18px] border-2 border-[#05070f] bg-white">
					<svg className="absolute inset-0 size-full">
						<path d={wavePath(186, 4, 0.4, 3)} fill="#9da3a9" />
						<path d={wavePath(186, 12, 0.4, 5)} fill="#9da3a9" />
					</svg>
				</div>
			</div>
			<button
				type="button"
				className="mr-[5px] ml-2 h-5 w-[47px] rounded-t-md bg-[#8f979c]"
			>
				2-Audio
			</button>
		</footer>
	);
}

function Pointer() {
	return (
		<svg
			className="pointer-events-none absolute top-[183px] left-[675px] z-10 h-[18px] w-3"
			viewBox="0 0 12 18"
		>
			<path
				d="M1 1v13l3-3 2.500 5.500 2.500-1L6.500 10H11z"
				fill="#0a0a0a"
				stroke="#fff"
			/>
		</svg>
	);
}

export default function App() {
	return (
		<div className="relative flex min-h-screen flex-col overflow-hidden bg-[#2b303e] font-['Liberation_Sans',Arial,sans-serif] text-[#14181d]">
			<Transport />
			<div className="flex flex-1 gap-2">
				<Browser />
				<Arrangement />
			</div>
			<div className="mt-[7px] flex gap-[7px]">
				<InfoView />
				<section className="flex min-w-0 flex-1 rounded-l-md bg-[#8f979c] pt-2 pb-[7px] pl-[7px] text-[10px]">
					<ClipBox />
					<div className="ml-[5px] flex">
						<SampleBox />
					</div>
					<div className="-mt-px ml-2 flex min-w-0 flex-1">
						<SampleEditor />
					</div>
				</section>
			</div>
			<StatusBar />
			<Pointer />
		</div>
	);
}
